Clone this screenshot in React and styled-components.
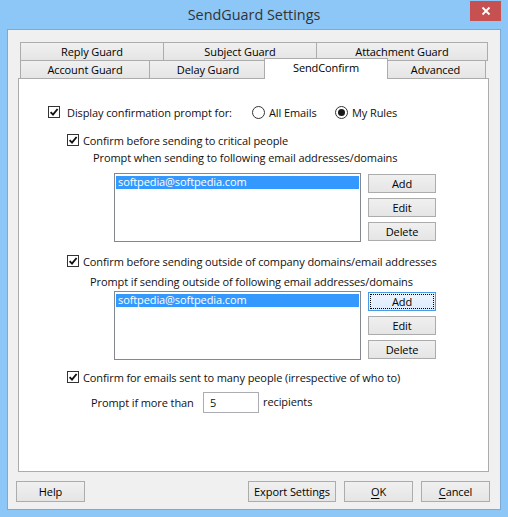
import React from "react";
import styled, { createGlobalStyle } from "styled-components";

const Global = createGlobalStyle`
  html, body { margin: 0; padding: 0; }
  body { width: 508px; height: 517px; overflow: hidden; background: #8CC7F8; }
  * { box-sizing: border-box; }
`;

const FONT = `"Open Sans", "Noto Sans", "Liberation Sans", sans-serif`;

const Window = styled.div`
  width: 508px;
  height: 517px;
  background: #8CC7F8;
  display: flex;
  flex-direction: column;
  font-family: ${FONT};
  font-size: 11px;
  letter-spacing: -0.1px;
  color: #111;
`;

const TitleBar = styled.div`
  height: 29px;
  flex: none;
  display: grid;
  grid-template-columns: 1fr auto 1fr;
  align-items: start;
`;

const Title = styled.div`
  grid-column: 2;
  font-size: 14.4px;
  letter-spacing: 0;
  line-height: 30px;
  color: #333;
`;

const CloseButton = styled.div`
  grid-column: 3;
  justify-self: end;
  margin: 1px 7px 0 0;
  width: 31px;
  height: 20px;
  background: #C75050;
  display: flex;
  align-items: center;
  justify-content: center;
`;

const Client = styled.div`
  flex: 1;
  margin: 0 7px 7px;
  border: 1px solid #80A8D0;
  background: #F0F0F0;
  padding-top: 12px;
  display: flex;
  flex-direction: column;
`;

const TabStrip = styled.div`
  margin-left: 12px;
  display: flex;
  flex-direction: column;
`;

const TabRow = styled.div`
  display: flex;
  height: 19px;
  margin-top: ${(p) => p.$mt || 0}px;
`;

const Tab = styled.div`
  flex: none;
  width: ${(p) => p.$w}px;
  height: 19px;
  margin-left: ${(p) => (p.$first ? 0 : -1)}px;
  border: 1px solid #ACACAC;
  background: linear-gradient(#F0F0F0, #E5E5E5);
  display: flex;
  align-items: center;
  justify-content: center;
  line-height: 1;
  color: #000;
`;

const ActiveTab = styled.div`
  flex: none;
  position: relative;
  z-index: 2;
  width: ${(p) => p.$w}px;
  height: 21px;
  margin: -2px -2px -1px -3px;
  border: 1px solid #ACACAC;
  border-bottom: none;
  background: #fff;
  display: flex;
  align-items: flex-start;
  justify-content: center;
  padding-top: 3px;
  line-height: 1.1;
  color: #000;
`;

const Panel = styled.div`
  position: relative;
  z-index: 1;
  margin: -1px 11px 0 10px;
  height: 394px;
  border: 1px solid #ACACAC;
  background: #fff;
  padding-top: 25px;
  display: flex;
  flex-direction: column;
`;

const Row = styled.div`
  display: flex;
  align-items: center;
  height: ${(p) => p.$h || 16}px;
  margin-top: ${(p) => p.$mt || 0}px;
  padding-left: ${(p) => p.$pl || 0}px;
  white-space: nowrap;
`;

const CheckBox = styled.span`
  flex: none;
  width: 12px;
  height: 12px;
  border: 1px solid #333;
  background: #fff;
  display: flex;
  align-items: center;
  justify-content: center;
  margin-right: ${(p) => p.$gap}px;
`;

const LabelText = styled.span`
  display: inline-block;
  flex: none;
  width: ${(p) => (p.$w ? `${p.$w}px` : "auto")};
  margin-bottom: ${(p) => p.$mb || 0}px;
`;

const RadioOption = styled.span`
  display: flex;
  align-items: center;
  width: ${(p) => (p.$w ? `${p.$w}px` : "auto")};
`;

const RadioCircle = styled.span`
  flex: none;
  width: 13px;
  height: 13px;
  border-radius: 50%;
  border: 1px solid #333;
  background: #fff;
  display: flex;
  align-items: center;
  justify-content: center;
  margin-right: 4px;
  &::after {
    content: "";
    display: ${(p) => (p.$checked ? "block" : "none")};
    width: 7px;
    height: 7px;
    border-radius: 50%;
    background: #1a1a1a;
  }
`;

const ListRow = styled.div`
  display: flex;
  align-items: flex-start;
  margin-top: ${(p) => p.$mt || 0}px;
  padding-left: 95px;
`;

const ListBox = styled.div`
  width: 247px;
  height: 69px;
  border: 1px solid #828790;
  background: #fff;
  padding: 2px 1px;
`;

const ListItem = styled.div`
  height: 13px;
  background: ${(p) => (p.$selected ? "#3399FF" : "transparent")};
  color: ${(p) => (p.$selected ? "#fff" : "#000")};
  padding-left: 2px;
  line-height: 12px;
`;

const ButtonColumn = styled.div`
  margin-left: 7px;
  margin-top: 1px;
  display: flex;
  flex-direction: column;
  gap: 5px;
`;

const Button = styled.div`
  flex: none;
  width: ${(p) => p.$w}px;
  height: ${(p) => p.$h || 19}px;
  border: 1px solid ${(p) => (p.$focused ? "#4A9BE6" : "#ACACAC")};
  background: ${(p) =>
    p.$focused ? "linear-gradient(#ECF4FC, #DCECFC)" : "linear-gradient(#F0F0F0, #E5E5E5)"};
  display: flex;
  align-items: center;
  justify-content: center;
  color: #000;
  line-height: 1;
  outline: ${(p) => (p.$focused ? "1px dotted #000" : "none")};
  outline-offset: -3px;
  u { text-decoration: underline; text-underline-offset: 2px; }
`;

const NumberInput = styled.div`
  flex: none;
  width: 56px;
  height: 21px;
  border: 1px solid #ABADB3;
  background: #fff;
  display: flex;
  align-items: center;
  padding-left: 6px;
  margin-right: 4px;
`;

const Footer = styled.div`
  display: flex;
  margin-top: 9px;
  padding: 0 10px 0 8px;
  gap: 8px;
`;

const Spacer = styled.div`
  flex: 1;
`;

const Check = () => (
  <svg width="10" height="10" viewBox="0 0 10 10">
    <path d="M1.6 5.2 L4 7.6 L8.6 2" fill="none" stroke="#111" strokeWidth="1.9" />
  </svg>
);

const CheckItem = ({ pl, mt, gap, children }) => (
  <Row $pl={pl} $mt={mt}>
    <CheckBox $gap={gap}>
      <Check />
    </CheckBox>
    <LabelText>{children}</LabelText>
  </Row>
);

const AddressList = ({ mt, focusAdd }) => (
  <ListRow $mt={mt}>
    <ListBox>
      <ListItem $selected>softpedia@softpedia.com</ListItem>
    </ListBox>
    <ButtonColumn>
      <Button $w={68} $focused={focusAdd}>Add</Button>
      <Button $w={68}>Edit</Button>
      <Button $w={68}>Delete</Button>
    </ButtonColumn>
  </ListRow>
);

export default function App() {
  return (
    <>
      <Global />
      <Window>
        <TitleBar>
          <Title>SendGuard Settings</Title>
          <CloseButton>
            <svg width="10" height="10" viewBox="0 0 10 10">
              <path d="M1.5 1.5 L8.5 8.5 M8.5 1.5 L1.5 8.5" stroke="#fff" strokeWidth="1.8" />
            </svg>
          </CloseButton>
        </TitleBar>
        <Client>
          <TabStrip>
            <TabRow>
              <Tab $w={144} $first>Reply Guard</Tab>
              <Tab $w={154}>Subject Guard</Tab>
              <Tab $w={172}>Attachment Guard</Tab>
            </TabRow>
            <TabRow $mt={-1}>
              <Tab $w={130} $first>Account Guard</Tab>
              <Tab $w={118}>Delay Guard</Tab>
              <ActiveTab $w={124}>SendConfirm</ActiveTab>
              <Tab $w={101}>Advanced</Tab>
            </TabRow>
          </TabStrip>
          <Panel>
            <Row $pl={29}>
              <CheckBox $gap={7}>
                <Check />
              </CheckBox>
              <LabelText $w={185}>Display confirmation prompt for:</LabelText>
              <RadioOption $w={83}>
                <RadioCircle />
                All Emails
              </RadioOption>
              <RadioOption>
                <RadioCircle $checked />
                My Rules
              </RadioOption>
            </Row>
            <CheckItem pl={48} mt={12} gap={4}>
              Confirm before sending to critical people
            </CheckItem>
            <Row $pl={74} $mt={1}>
              Prompt when sending to following email addresses/domains
            </Row>
            <AddressList mt={8} />
            <CheckItem pl={48} mt={11} gap={4}>
              Confirm before sending outside of company domains/email addresses
            </CheckItem>
            <Row $pl={71} $mt={4}>
              Prompt if sending outside of following email addresses/domains
            </Row>
            <AddressList mt={2} focusAdd />
            <CheckItem pl={48} mt={9} gap={4}>
              Confirm for emails sent to many people (irrespective of who to)
            </CheckItem>
            <Row $pl={72} $mt={7} $h={21}>
              <LabelText $w={112}>Prompt if more than</LabelText>
              <NumberInput>5</NumberInput>
              <LabelText $mb={2}>recipients</LabelText>
            </Row>
          </Panel>
          <Footer>
            <Button $w={69} $h={21}>Help</Button>
            <Spacer />
            <Button $w={88} $h={21}>Export Settings</Button>
            <Button $w={69} $h={21}>
              <span><u>O</u>K</span>
            </Button>
            <Button $w={69} $h={21}>
              <span><u>C</u>ancel</span>
            </Button>
          </Footer>
        </Client>
      </Window>
    </>
  );
}
